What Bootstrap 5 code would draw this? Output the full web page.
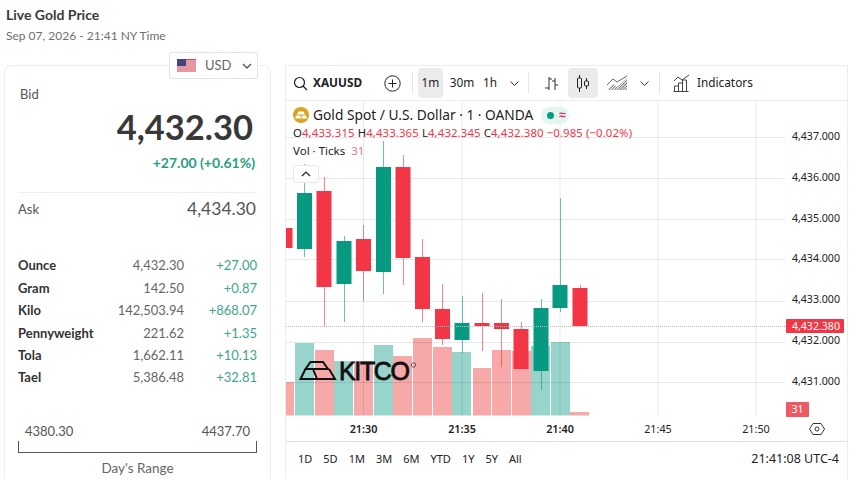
<!DOCTYPE html>
<html lang="en">
<head>
  <meta charset="UTF-8">
  <meta name="viewport" content="width=device-width, initial-scale=1.0">
  <title>Live Gold Price</title>
  <link href="https://cdn.jsdelivr.net/npm/bootstrap@5.3.3/dist/css/bootstrap.min.css" rel="stylesheet">
  <style>
    html, body { height: 479px; overflow: hidden; }
    body { font-family: Lato, "Noto Sans", sans-serif; color: #333; background: #fff; }
    .page-head { padding: 7px 6px 0; height: 65px; }
    .page-title { font-size: 14px; font-weight: 700; line-height: 16px; margin: 0; color: #3a3a3a; }
    .page-date { font-size: 12px; line-height: 16px; margin-top: 5px; color: #6f6f6f; }
    .main-row { height: 414px; padding: 0 2px 0 4px; gap: 14px; }

    .price-panel { width: 267px; flex: none; position: relative; border: 1px solid #eee; border-bottom: 0; border-radius: 8px 8px 0 0; padding: 0 13px; }
    .currency-btn { position: absolute; top: -14px; left: 164px; width: 89px; height: 27px; padding: 0 0 0 7px; background: #fff; border: 1px solid #e3e3e3; border-radius: 3px; font-size: 13px; color: #666; display: flex; align-items: center; }
    .flag-icon { margin-right: 9px; }
    .chevron-icon { margin-left: 10px; }
    .bid-label { font-size: 13px; line-height: 16px; padding: 20px 0 0 2px; color: #555; }
    .bid-price { font-size: 34.5px; font-weight: 700; line-height: 44px; text-align: right; padding-right: 4px; margin-top: 3px; color: #383838; }
    .bid-change { font-size: 14px; font-weight: 700; line-height: 18px; text-align: right; padding-right: 2px; margin-top: 5px; color: #2a9d83; }
    .ask-row { border-top: 1px solid #eee; margin-top: 20px; height: 34px; padding-right: 1px; font-size: 13px; color: #555; }
    .ask-price { font-size: 17.5px; }
    .unit-table { margin: 29px 0 0; font-size: 13px; }
    .unit-table td { padding: 0; height: 22.4px; border: 0; vertical-align: middle; }
    .unit-name { font-weight: 700; color: #333; }
    .unit-val { text-align: right; color: #666; }
    .unit-chg { text-align: right; color: #3da58d; width: 73px; }
    .range-vals { margin-top: 34px; padding: 0 7px; font-size: 13px; line-height: 16px; color: #555; }
    .range-bracket { height: 12px; margin-top: 2px; border: 1px solid #555; border-top: 0; }
    .range-label { font-size: 13.5px; line-height: 16px; margin-top: 7px; text-align: center; color: #666; }

    .chart-panel { width: 563px; flex: none; border: 1px solid #ececec; border-bottom: 0; font-family: "Noto Sans", sans-serif; color: #222; }
    .chart-tools { height: 35px; border-bottom: 1px solid #ececec; padding: 2px 0; }
    .tool-item { height: 30px; display: inline-flex; align-items: center; justify-content: center; border-radius: 4px; font-size: 11.8px; flex: none; }
    .tool-on { background: #ebebeb; }
    .tool-sep { width: 1px; height: 22px; background: #e6e6e6; flex: none; }
    .chart-wrap { position: relative; height: 340px; }
    .chart-wrap svg { display: block; }
    .chart-legend { position: absolute; left: 7px; top: 5px; }
    .legend-title { font-size: 13.75px; line-height: 18px; color: #222; }
    .legend-pill { background: #e4f4f0; border-radius: 9px; height: 17px; padding: 0 3px 0 6px; margin-left: 8px; font-size: 12px; font-weight: 700; line-height: 16px; color: #d0306a; }
    .legend-dot { width: 7px; height: 7px; border-radius: 50%; background: #089981; margin-right: 5px; }
    .legend-ohlc { font-size: 11.4px; line-height: 16px; margin-top: 1px; color: #f23645; letter-spacing: .1px; white-space: nowrap; }
    .legend-ohlc b { font-weight: 400; color: #222; }
    .legend-vol { font-size: 11.5px; line-height: 16px; margin-top: 2px; color: #222; }
    .legend-vol i { font-style: normal; color: #e0787f; margin-left: 3px; }
    .legend-fold { width: 26px; height: 18px; margin-top: 6px; border: 1px solid #e8e8e8; border-radius: 3px; background: #fff; }
    .chart-range { height: 36px; font-size: 11px; padding: 0 8px 0 12px; gap: 11px; }
    .chart-clock { font-size: 12.5px; margin-left: auto; }
  </style>
</head>
<body>
  <div class="page-head">
    <p class="page-title">Live Gold Price</p>
    <div class="page-date">Sep 07, 2026 - 21:41 NY Time</div>
  </div>

  <div class="main-row d-flex">
    <!-- Price panel -->
    <div class="price-panel">
      <button type="button" class="currency-btn">
        <svg width="19" height="13" viewBox="0 0 19 13" class="flag-icon">
          <rect width="19" height="13" fill="#d8495a"/>
          <path d="M0 2h19M0 4h19M0 6h19M0 8h19M0 10h19M0 12h19" stroke="#f4e6e8" stroke-width="1"/>
          <rect width="9" height="7" fill="#45457e"/>
        </svg>
        <span>USD</span>
        <svg width="10" height="6" viewBox="0 0 10 6" class="chevron-icon"><path d="M1 1l4 4 4-4" fill="none" stroke="#555" stroke-width="1.4"/></svg>
      </button>
      <div class="bid-label">Bid</div>
      <div class="bid-price">4,432.30</div>
      <div class="bid-change">+27.00 (+0.61%)</div>
      <div class="ask-row d-flex justify-content-between align-items-center">
        <span>Ask</span><span class="ask-price">4,434.30</span>
      </div>
      <table class="unit-table w-100">
        <tbody id="unit-rows"></tbody>
      </table>
      <div class="range-vals d-flex justify-content-between"><span>4380.30</span><span>4437.70</span></div>
      <div class="range-bracket"></div>
      <div class="range-label">Day's Range</div>
    </div>

    <!-- Chart panel -->
    <div class="chart-panel">
      <div class="chart-tools d-flex align-items-center">
        <span class="tool-item" style="width:26px;margin-left:1px">
          <svg width="15" height="15" viewBox="0 0 15 15"><circle cx="6.5" cy="6.5" r="5" fill="none" stroke="#222" stroke-width="1.2"/><path d="M10 10l4 4" stroke="#222" stroke-width="1.2"/></svg>
        </span>
        <span class="tool-item fw-bold" style="width:47px;justify-content:flex-start">XAUUSD</span>
        <span class="tool-item" style="width:18px;margin-left:23px">
          <svg width="17" height="17" viewBox="0 0 17 17"><circle cx="8.5" cy="8.5" r="7.7" fill="none" stroke="#222"/><path d="M8.5 4.5v8M4.5 8.5h8" stroke="#222"/></svg>
        </span>
        <span class="tool-sep" style="margin-left:11px"></span>
        <span class="tool-item tool-on" style="width:25px;margin-left:5px">1m</span>
        <span class="tool-item" style="width:32px;margin-left:3px">30m</span>
        <span class="tool-item" style="width:20px;margin-left:2px">1h</span>
        <span class="tool-item" style="width:14px;margin-left:7px">
          <svg width="9" height="5" viewBox="0 0 9 5"><path d="M.5.5l4 4 4-4" fill="none" stroke="#333"/></svg>
        </span>
        <span class="tool-sep" style="margin-left:7px"></span>
        <span class="tool-item" style="width:30px;margin-left:7px">
          <svg width="15" height="15" viewBox="0 0 15 15"><path d="M5 1v13M5 3H8M1 12H5M11 2v12M11 5H8M11 9h3" fill="none" stroke="#333"/></svg>
        </span>
        <span class="tool-item tool-on" style="width:30px;margin-left:2px">
          <svg width="14" height="17" viewBox="0 0 14 17"><path d="M3.500 0v3M3.500 13v4M10.500 3v3M10.500 11v3" stroke="#222"/><rect x="1.500" y="3" width="4" height="10" rx="1" fill="none" stroke="#222"/><rect x="8.500" y="6" width="4" height="5" rx="1" fill="none" stroke="#222"/></svg>
        </span>
        <span class="tool-item" style="width:30px;margin-left:4px">
          <svg width="22" height="16" viewBox="0 0 22 16">
            <defs><pattern id="hatch" width="2" height="2" patternUnits="userSpaceOnUse" patternTransform="rotate(45)"><rect width="1" height="2" fill="#777"/></pattern></defs>
            <path d="M1 15L7 9l4 3 10-9v12z" fill="url(#hatch)"/><path d="M1 10l6-6 4 3 10-6" fill="none" stroke="#666"/>
          </svg>
        </span>
        <span class="tool-item" style="width:15px;margin-left:5px">
          <svg width="9" height="5" viewBox="0 0 9 5"><path d="M.5.5l4 4 4-4" fill="none" stroke="#333"/></svg>
        </span>
        <span class="tool-sep" style="margin-left:7px"></span>
        <span class="tool-item" style="width:17px;margin-left:13px">
          <svg width="17" height="18" viewBox="0 0 17 18"><path d="M1 7l4-4 4 3 7-5" fill="none" stroke="#444"/><path d="M1.500 17v-5h4v5M5.500 17v-8h4v8M9.500 17v-11h4v11M.5 17.500h15" fill="none" stroke="#444"/></svg>
        </span>
        <span class="tool-item" style="margin-left:7px">Indicators</span>
      </div>

      <div class="chart-wrap">
        <svg id="chart" width="563" height="341" viewBox="285 100 563 341"></svg>
        <div class="chart-legend">
          <div class="d-flex align-items-center">
            <svg width="16" height="16" viewBox="0 0 16 16" class="me-1"><circle cx="8" cy="8" r="8" fill="#d9a520"/><path d="M5.500 4.500h5l1.500 3h-8zM2 11.500l1.200-3h4l1 3zM8.500 11.500l.5-3h4l1 3z" fill="#fff"/></svg>
            <span class="legend-title">Gold Spot / U.S. Dollar · 1 · OANDA</span>
            <span class="legend-pill d-flex align-items-center"><span class="legend-dot"></span>≈</span>
          </div>
          <div class="legend-ohlc"><b>O</b>4,433.315 <b>H</b>4,433.365 <b>L</b>4,432.345 <b>C</b>4,432.380 −0.985 (−0.02%)</div>
          <div class="legend-vol">Vol · Ticks <i>31</i></div>
          <div class="legend-fold d-flex align-items-center justify-content-center">
            <svg width="10" height="6" viewBox="0 0 10 6"><path d="M1 5l4-4 4 4" fill="none" stroke="#222" stroke-width="1.200"/></svg>
          </div>
        </div>
      </div>

      <div class="chart-range d-flex align-items-center border-top">
        <span>1D</span><span>5D</span><span>1M</span><span>3M</span><span>6M</span><span>YTD</span><span>1Y</span><span>5Y</span><span>All</span>
        <span class="chart-clock">21:41:08 UTC-4</span>
      </div>
    </div>
  </div>

  <script src="https://cdn.jsdelivr.net/npm/bootstrap@5.3.3/dist/js/bootstrap.bundle.min.js"></script>
  <script>
    // Price table
    const units = [
      ['Ounce', '4,432.30', '+27.00'],
      ['Gram', '142.50', '+0.87'],
      ['Kilo', '142,503.94', '+868.07'],
      ['Pennyweight', '221.62', '+1.35'],
      ['Tola', '1,662.11', '+10.13'],
      ['Tael', '5,386.48', '+32.81'],
    ];
    document.getElementById('unit-rows').innerHTML = units.map(u =>
      `<tr><td class="unit-name">${u[0]}</td><td class="unit-val">${u[1]}</td><td class="unit-chg">${u[2]}</td></tr>`
    ).join('');

    // Chart: x centre, wick top, body top, body bottom, wick bottom, up?
    const candles = [
      [284, 227, 227, 247, 247, 0],
      [303.5, 163, 192, 248, 256, 1],
      [323, 176, 190, 286, 325, 0],
      [343, 235, 240, 283, 321, 1],
      [362.5, 224, 238, 270, 300, 0],
      [382.5, 140, 166, 271, 293, 1],
      [402, 154, 166, 257, 284, 0],
      [421.5, 238, 256, 308, 321, 0],
      [441.5, 283, 308, 338, 344, 0],
      [461, 295, 322, 339, 352, 1],
      [481, 292, 322, 325, 350, 0],
      [500.5, 298, 322, 328, 366, 0],
      [520, 321, 328, 368, 368, 0],
      [540, 298, 307, 370, 389, 1],
      [559, 197, 284, 307, 311, 1],
      [579, 284, 287, 325, 325, 0],
    ];
    // x, width, top of volume bar, up?
    const volumes = [
      [285, 8, 381, 0], [294, 19, 342, 1], [314, 19, 349, 0], [333, 19, 360, 1],
      [353, 19, 360, 0], [373, 19, 344, 1], [392, 19, 355, 0], [412, 19, 337, 0],
      [432, 19, 346, 0], [451, 19, 351, 1], [472, 18, 367, 0], [491, 19, 349, 0],
      [511, 19, 350, 0], [530, 19, 345, 1], [550, 19, 341, 1], [569, 19, 411, 0],
    ];
    const GREEN = '#089981', RED = '#f23645';
    let s = '';
    const text = (x, y, t, anchor, fill, size, weight) =>
      `<text x="${x}" y="${y}" text-anchor="${anchor}" fill="${fill || '#222'}" font-size="${size || 10.6}" font-weight="${weight || 400}">${t}</text>`;

    // volume
    volumes.forEach(v => {
      s += `<rect x="${v[0]}" y="${v[2]}" width="${v[1]}" height="${414.5 - v[2]}" fill="${v[3] ? '#97d5cc' : '#f7a8a8'}"/>`;
    });

    // grid sits on top of the volume bars
    [136, 177, 218, 258, 300, 341, 381].forEach(y => { s += `<path d="M285 ${y}.5H784" stroke="#000" stroke-opacity=".09"/>`; });
    [362.5, 461, 559, 657, 755].forEach(x => { s += `<path d="M${x} 100V415" stroke="#000" stroke-opacity=".09"/>`; });

    // kitco logo
    s += `<g fill="none" stroke="#111" stroke-width="2"><path d="M309.500 361H322L327 368H304.500zM304.500 368L299.500 378H316L312 368M316 378H334L328 368"/></g>`;
    s += `<text x="338" y="378.500" font-family="'Liberation Sans',sans-serif" font-size="25" fill="#111" stroke="#111" stroke-width=".8" textLength="71">KITCO</text>`;
    s += `<circle cx="412.500" cy="364" r="2.200" fill="none" stroke="#333" stroke-width=".7"/>`;

    // candles
    candles.forEach(c => {
      const col = c[5] ? GREEN : RED;
      s += `<path d="M${Math.floor(c[0]) + .5} ${c[1]}V${c[4]}" stroke="${col}" stroke-opacity=".6"/>`;
      s += `<rect x="${c[0] - 7.5}" y="${c[2]}" width="15" height="${c[3] - c[2]}" fill="${col}"/>`;
    });

    // last price line
    s += `<path d="M285 325.500H784" stroke="#bbb" stroke-dasharray="1 1"/>`;

    // price axis
    [[135, '4,437.000'], [176, '4,436.000'], [217, '4,435.000'], [257, '4,434.000'], [298, '4,433.000'], [339, '4,432.000'], [380, '4,431.000']].forEach(p => {
      s += text(839, p[0] + 4, p[1], 'end');
    });
    s += `<rect x="785" y="318" width="58" height="14" rx="1" fill="${RED}"/>` + text(839, 329, '4,432.380', 'end', '#fff');
    s += `<rect x="785" y="401" width="23" height="15" rx="1" fill="#ee5a63"/>` + text(796.5, 412, '31', 'middle', '#fff');

    // time axis
    [[362.5, '21:30', 600], [461, '21:35', 600], [559, '21:40', 600], [657, '21:45'], [755, '21:50']].forEach(t => {
      s += text(t[0], 431.5, t[1], 'middle', '#222', 10.8, t[2]);
    });
    s += `<path d="M812 422.500h8l3.500 5.500-3.500 5.500h-8l-3.500-5.500z" fill="none" stroke="#333"/><circle cx="816" cy="428" r="2" fill="none" stroke="#333"/>`;

    document.getElementById('chart').innerHTML = s;
  </script>
</body>
</html>
